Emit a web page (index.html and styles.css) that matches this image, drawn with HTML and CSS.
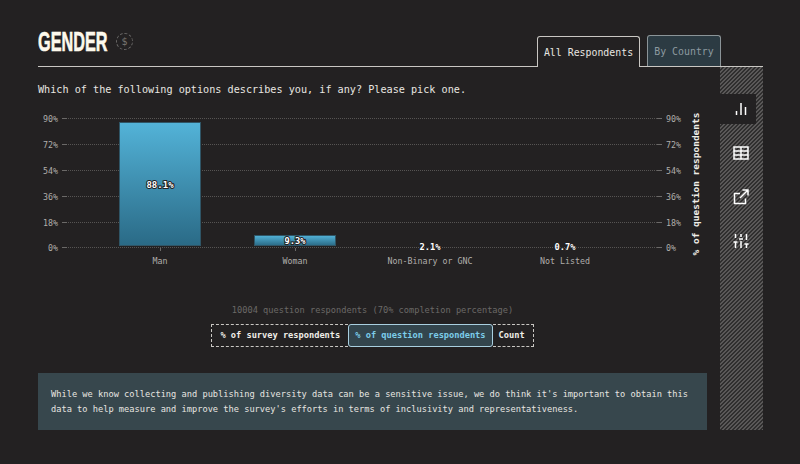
FILE: index.html
```html
<!DOCTYPE html>
<html lang="en">
<head>
<meta charset="utf-8">
<title>Gender</title>
<link rel="stylesheet" href="styles.css">
</head>
<body>
<main class="page">
  <header class="head">
    <div class="title-group">
      <h1 class="title">GENDER</h1>
      <span class="badge">$</span>
    </div>
    <nav class="tabs">
      <span class="tab tab-active">All Respondents</span>
      <span class="tab tab-idle">By Country</span>
    </nav>
  </header>
  <div class="body-row">
    <section class="content">
      <p class="question">Which of the following options describes you, if any? Please pick one.</p>
      <svg class="chart" width="669" height="190" viewBox="0 0 669 190">
        <g class="grid">
          <line x1="24" x2="624" y1="8.5" y2="8.5"/><line x1="24" x2="624" y1="34.5" y2="34.5"/>
          <line x1="24" x2="624" y1="60.5" y2="60.5"/><line x1="24" x2="624" y1="86.5" y2="86.5"/>
          <line x1="24" x2="624" y1="112.5" y2="112.5"/><line x1="24" x2="624" y1="137.5" y2="137.5"/>
        </g>
        <g class="ticks">
          <line x1="24" x2="29" y1="8.5" y2="8.5"/><line x1="24" x2="29" y1="34.5" y2="34.5"/>
          <line x1="24" x2="29" y1="60.5" y2="60.5"/><line x1="24" x2="29" y1="86.5" y2="86.5"/>
          <line x1="24" x2="29" y1="112.5" y2="112.5"/><line x1="24" x2="29" y1="137.5" y2="137.5"/>
          <line x1="619" x2="624" y1="8.5" y2="8.5"/><line x1="619" x2="624" y1="34.5" y2="34.5"/>
          <line x1="619" x2="624" y1="60.5" y2="60.5"/><line x1="619" x2="624" y1="86.5" y2="86.5"/>
          <line x1="619" x2="624" y1="112.5" y2="112.5"/><line x1="619" x2="624" y1="137.5" y2="137.5"/>
          <line x1="122.5" x2="122.5" y1="138" y2="141"/><line x1="257.5" x2="257.5" y1="138" y2="141"/>
          <line x1="392.5" x2="392.5" y1="138" y2="141"/><line x1="527.5" x2="527.5" y1="138" y2="141"/>
        </g>
        <defs>
          <linearGradient id="barfill" x1="0" x2="0" y1="0" y2="1">
            <stop offset="0" stop-color="#53b3d8"/>
            <stop offset="1" stop-color="#2a6a86"/>
          </linearGradient>
        </defs>
        <rect class="bar" x="81.5" y="12.5" width="81" height="123" fill="url(#barfill)"/>
        <rect class="bar" x="216.5" y="125.5" width="81" height="10" fill="url(#barfill)"/>
        <g class="axis-left">
          <text x="20" y="12">90%</text><text x="20" y="38">72%</text><text x="20" y="64">54%</text>
          <text x="20" y="90">36%</text><text x="20" y="116">18%</text><text x="20" y="141">0%</text>
        </g>
        <g class="axis-right">
          <text x="628" y="12">90%</text><text x="628" y="38">72%</text><text x="628" y="64">54%</text>
          <text x="628" y="90">36%</text><text x="628" y="116">18%</text><text x="628" y="141">0%</text>
        </g>
        <g class="cats">
          <text x="122" y="154">Man</text><text x="257" y="154">Woman</text>
          <text x="392" y="154">Non-Binary or GNC</text><text x="527" y="154">Not Listed</text>
        </g>
        <g class="values">
          <text class="val-big" x="122" y="78">88.1%</text><text x="257" y="134">9.3%</text>
          <text x="392" y="139.500">2.1%</text><text x="527" y="140">0.7%</text>
        </g>
        <text class="axis-title" transform="translate(661 74) rotate(-90)">% of question respondents</text>
      </svg>
      <p class="respondents">10004 question respondents (70% completion percentage)</p>
      <div class="units">
        <span class="unit">% of survey respondents</span>
        <span class="unit unit-active">% of question respondents</span>
        <span class="unit">Count</span>
      </div>
      <p class="note">While we know collecting and publishing diversity data can be a sensitive issue, we do think it's important to obtain this data to help measure and improve the survey's efforts in terms of inclusivity and representativeness.</p>
    </section>
    <aside class="rail">
      <span class="rail-btn rail-btn-active">
        <svg class="icon" viewBox="0 0 16 16"><path d="M3.500 14v-4M8 14V2M12.500 14V6"/></svg>
      </span>
      <span class="rail-btn">
        <svg class="icon" viewBox="0 0 16 16"><path d="M1 2h14v12H1zM1 6h14M1 10h14M8 2v12"/></svg>
      </span>
      <span class="rail-btn">
        <svg class="icon" viewBox="0 0 16 16"><path d="M12.500 9.500v5H1.500V4.500H7M9.500 1h5.500v5.500M15 1L7 9"/></svg>
      </span>
      <span class="rail-btn">
        <svg class="icon" viewBox="0 0 16 16"><path d="M2.500 1v4M2.500 9v6M8 1v3M8 8v7M13.500 1v6M13.500 11v4M.500 9h4M6 6h4M11.500 11h4"/></svg>
      </span>
    </aside>
  </div>
</main>
</body>
</html>
```
FILE: styles.css
```css
* { box-sizing: border-box; }
html, body { margin: 0; height: 100%; }
body {
  background: #232122;
  color: #f0eee8;
  font-family: "DejaVu Sans Mono", monospace;
  font-size: 10.170px;
  overflow: hidden;
}
.page { padding: 26px 37px 0 38px; }
.head {
  display: flex;
  justify-content: space-between;
  align-items: flex-end;
  border-bottom: 1px solid #c9c7c3;
  height: 41px;
  padding-right: 42px;
}
.title-group { display: flex; align-items: center; gap: 8px; height: 31px; margin-bottom: 9px; }
.title {
  margin: 0;
  width: 70px;
  font-family: "Liberation Sans", sans-serif;
  font-size: 28px;
  font-weight: 700;
  line-height: 31px;
  white-space: nowrap;
  color: #fdf9ec;
  transform: scaleX(.58);
  transform-origin: left center;
  -webkit-text-stroke: .6px #fdf9ec;
}
.badge {
  width: 17px;
  height: 17px;
  border: 1px dashed #6b6968;
  border-radius: 50%;
  color: #77736f;
  font-size: 10px;
  line-height: 15px;
  text-align: center;
}
.tabs { display: flex; align-items: flex-end; gap: 7px; margin-bottom: -1px; }
.tab { display: block; font-size: 9.900px; text-align: center; }
.tab-active {
  width: 103px;
  height: 31px;
  line-height: 32px;
  background: #232122;
  border: 1px solid #c9c7c3;
  border-bottom: 0;
  border-radius: 3px 3px 0 0;
  color: #e8e6e1;
}
.tab-idle {
  width: 74px;
  height: 31px;
  line-height: 31px;
  background: #2c3b43;
  border: 1px solid #8b9498;
  border-bottom: 0;
  border-radius: 3px 3px 0 0;
  color: #8d9aa0;
  margin-bottom: 1px;
}
.body-row { display: flex; align-items: flex-start; gap: 13px; }
.content { width: 669px; flex: none; }
.question { margin: 0; padding-top: 16px; height: 43px; line-height: 14px; color: #e8e6e1; }
.chart { display: block; font-size: 8.300px; }
.grid line { stroke: #565453; stroke-dasharray: 1 1; }
.ticks line { stroke: #6b6968; }
.bar { stroke: #2f5566; stroke-width: 1; }
.axis-left text { fill: #b0aeab; text-anchor: end; }
.axis-right text { fill: #b0aeab; }
.cats text { fill: #b0aeab; text-anchor: middle; }
.values text {
  fill: #fff;
  font-size: 8.700px;
  font-weight: 700;
  text-anchor: middle;
  paint-order: stroke;
  stroke: #232122;
  stroke-width: 2px;
}
.values .val-big { font-size: 9px; }
.axis-title { fill: #f0eee8; font-weight: 700; font-size: 9.500px; text-anchor: middle; }
.respondents { margin: 0; padding-top: 3px; text-align: center; color: #6b6967; font-size: 8.670px; line-height: 14px; }
.units { display: flex; justify-content: center; margin-top: 7px; height: 23px; font-size: 8.670px; font-weight: 700; }
.unit {
  padding: 0 8px;
  line-height: 21px;
  border: 1px dashed #c9c7c3;
  border-right: 0;
  color: #f0eee8;
}
.unit:last-child { padding-left: 6px; border-right: 1px dashed #c9c7c3; border-left: 0; }
.unit-active {
  padding: 0 6px;
  background: #33454d;
  color: #7ccdea;
  border: 1px solid #a9cfe0;
  border-radius: 3px;
}
.note {
  margin: 26px 0 0;
  background: #37474d;
  padding: 14px 13px;
  height: 57px;
  line-height: 15px;
  font-size: 8.690px;
  color: #e8e6e1;
}
.rail {
  width: 43px;
  height: 363px;
  flex: none;
  display: flex;
  flex-direction: column;
  padding-top: 27px;
  background: repeating-linear-gradient(-45deg, #5a5858 0 1.414px, #2f2e2e 1.414px 2.828px);
}
.rail-btn { display: flex; align-items: center; justify-content: center; width: 36px; height: 44px; flex: none; padding-left: 5px; }
.rail-btn-active { height: 30px; margin-bottom: 7px; background: #232122; }
.icon { width: 16px; height: 16px; fill: none; stroke: #fff; stroke-width: 1.500; }
```
